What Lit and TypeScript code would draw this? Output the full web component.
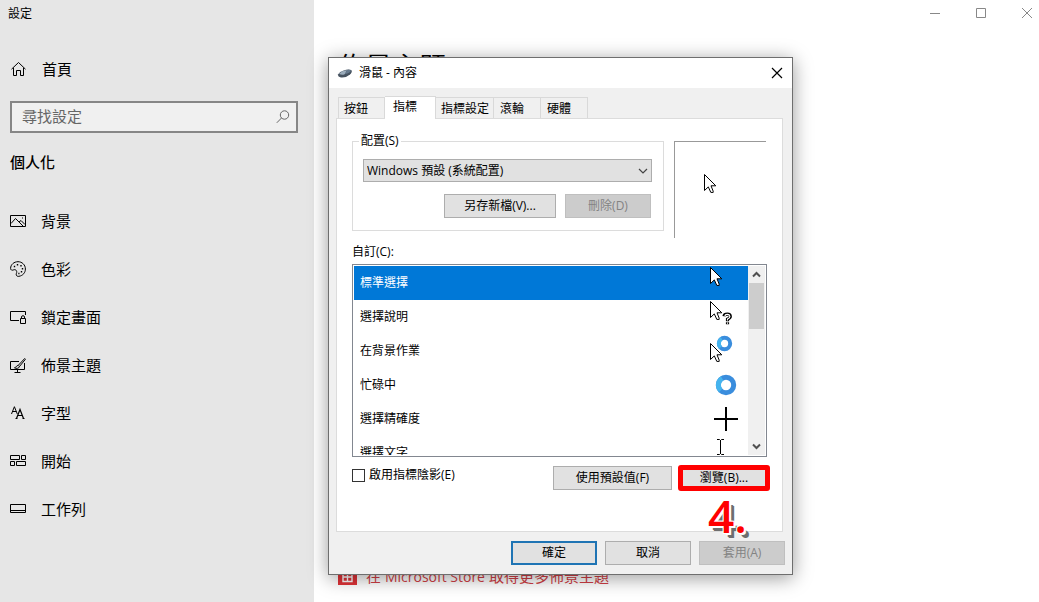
import { LitElement, html, svg, css } from "lit";
import { customElement, state } from "lit/decorators.js";

const arrow = (x: number, y: number) => svg`
  <path transform="translate(${x} ${y})" d="M.5 .5V16.5L4.3 12.9L6.8 18.4H9.2V17.2L7 11.8H11.8Z"
    fill="#fff" stroke="#000" stroke-width="1" stroke-linejoin="miter"/>`;

const ring = (x: number, y: number, r: number, w: number) => svg`
  <circle cx=${x} cy=${y} r=${r} fill="#fff" stroke="#3a8ddd" stroke-width=${w}/>
  <path d="M${x - r * 0.7} ${y + r * 0.7}A${r} ${r} 0 0 1 ${x - r * 0.5} ${y - r * 0.86}" fill="none" stroke="#45b4ee" stroke-width=${w}/>`;

const pointers = [
  { name: "標準選擇", art: arrow(2, 1) },
  {
    name: "選擇說明",
    art: svg`${arrow(2, 1)}
      <g fill="none">
        <path d="M16 16.2Q16.3 14.2 19.3 14.2T22.3 16.4Q22.3 17.8 19.5 19.2V21.2M19.5 22.2V24.2" stroke="#000" stroke-width="3.2"/>
        <path d="M17 16.2Q17 14.4 19.3 14.4T21.9 16.4Q21.9 17.8 19.5 19V20.6M19.5 22.6V23.7" stroke="#fff" stroke-width="1.1"/>
      </g>`,
  },
  { name: "在背景作業", art: svg`${ring(16.5, 9.5, 5.7, 4)}${arrow(2, 9)}` },
  { name: "忙碌中", art: ring(18, 17, 7.7, 5) },
  { name: "選擇精確度", art: svg`<path d="M18 5V29M6 17H30" stroke="#000" stroke-width="2"/>` },
  {
    name: "選擇文字",
    art: svg`<path d="M9 3.5H11.5L12.5 4.5L13.5 3.5H16M12.5 4V18M9 18.5H11.5L12.5 17.5L13.5 18.5H16" fill="none" stroke="#000"/>`,
  },
];

const navItems = [
  {
    name: "背景",
    art: svg`<path d="M.5 2.5H15.5V13.5H.5ZM1 10.5L5.5 5.5L13 13M9 9L11 7.5L15 11.5"/><path d="M12 5H13" />`,
  },
  {
    name: "色彩",
    art: svg`<path d="M8 .7C4 .7 .6 3.6 .6 7.4C.6 9 2 9.6 3.2 9C4.6 8.2 6.4 8.8 6.7 10.4C7 12 5.8 12.8 6.3 14C6.8 15.4 8 15.5 9 15.3C13 14.6 15.4 11.6 15.4 8C15.4 3.8 12 .7 8 .7Z"/>
      <path d="M3.8 5.5H5.2M6.8 3.7H8.2M10.3 4.7H11.7M11.8 7.7H13.2M10.8 10.7H12.2M8.3 12.5H9.5" stroke-width="1.5"/>`,
  },
  {
    name: "鎖定畫面",
    art: svg`<path d="M9 11.5H.5V2.5H15.5V6"/><path d="M10.5 9.5H15.5V14.5H10.5ZM11.5 9.5V8Q11.5 6.7 13 6.7T14.5 8V9.5"/>`,
  },
  {
    name: "佈景主題",
    art: svg`<path d="M9 4.5H.5V12.5H14.5V6M7.5 12.5V15M4.5 15.5H10.5"/><path d="M14.7 1.5L8.2 8.4L9.4 9.6L15.4 2.3Z M8.2 8.4C6.4 8.5 6.5 10.2 4.5 10.8C6.3 11.8 9 11.6 9.4 9.6"/>`,
  },
  {
    name: "字型",
    art: svg`<path d="M1.5 9L4.4 1.7L7.3 9M2.5 6.5H6.3"/><path d="M6.5 13.5L10 4.5L13.5 13.5M7.7 10.5H12.3M5.5 13.5H7.5M12.5 13.5H14.5" stroke-width="1.2"/>`,
  },
  {
    name: "開始",
    art: svg`<path d="M.5 2.5H9.5V6.5H.5ZM11.5 2.5H15.5V6.5H11.5ZM.5 8.5H4.5V12.5H.5ZM6.5 8.5H15.5V12.5H6.5Z"/>`,
  },
  { name: "工作列", art: svg`<path d="M.5 3.5H15.5V11.5H.5ZM.5 9.5H15.5"/>` },
];

const tabs = ["按鈕", "指標", "指標設定", "滾輪", "硬體"];

const shared = css`
  * {
    box-sizing: border-box;
  }
  button,
  input,
  select {
    font: inherit;
    color: inherit;
    margin: 0;
  }
  svg {
    display: block;
    flex: none;
  }
`;

@customElement("settings-sidebar")
export class SettingsSidebar extends LitElement {
  static styles = [
    shared,
    css`
      :host {
        display: block;
        background: #e6e6e6;
        font-size: 15px;
        line-height: 20px;
      }
      .caption {
        padding: 4px 8px;
        font-size: 12px;
      }
      a {
        display: flex;
        align-items: center;
        gap: 15px;
        height: 48px;
        padding: 0 10px;
        color: #000;
        text-decoration: none;
      }
      .home {
        margin-top: 17px;
        gap: 16px;
      }
      .search {
        display: flex;
        align-items: center;
        height: 32px;
        margin: 8px 16px 0 10px;
        padding: 0 6px 0 10px;
        border: 2px solid #868686;
        background: #f0f0f0;
      }
      .search input {
        flex: 1;
        min-width: 0;
        padding: 0 0 2px;
        border: 0;
        outline: 0;
        background: none;
      }
      .search input::placeholder {
        color: #666;
        opacity: 1;
      }
      h2 {
        margin: 19px 10px 25px;
        font-size: 15px;
        font-weight: 500;
      }
    `,
  ];

  render() {
    return html`
      <div class="caption">設定</div>
      <a class="home" href="#home">
        <svg width="16" height="16" viewBox="0 0 16 16" fill="none" stroke="#000">
          <path d="M1.5 8.2L8.5 1.5L15.5 8.2M3.5 6.8V14.5H6.5V9.5H10.5V14.5H13.5V6.8" />
        </svg>
        首頁
      </a>
      <div class="search">
        <input type="text" placeholder="尋找設定" aria-label="尋找設定" />
        <svg width="14" height="14" viewBox="0 0 14 14" fill="none" stroke="#666">
          <circle cx="8.5" cy="5" r="4.2" />
          <path d="M5.5 8L.8 12.8" />
        </svg>
      </div>
      <h2>個人化</h2>
      <nav>
        ${navItems.map(
          (n) => html`<a href="#">
            <svg width="16" height="16" viewBox="0 0 16 16" fill="none" stroke="#000">${n.art}</svg>
            ${n.name}
          </a>`
        )}
      </nav>
    `;
  }
}

@customElement("mouse-dialog")
export class MouseDialog extends LitElement {
  @state() tab = 1;
  @state() selected = 0;

  static styles = [
    shared,
    css`
      :host {
        display: block;
        border: 1px solid #6e6e6e;
        background: #f0f0f0;
        box-shadow: 0 3px 18px rgba(0, 0, 0, 0.4);
        font-size: 12px;
        line-height: 16px;
      }
      header {
        display: flex;
        align-items: center;
        gap: 6px;
        height: 30px;
        padding: 0 8px;
        background: #fff;
      }
      h1 {
        flex: 1;
        margin: 0;
        font-size: 12px;
        font-weight: 400;
      }
      .close {
        padding: 0;
        border: 0;
        background: none;
      }
      .tabs {
        display: flex;
        align-items: flex-end;
        height: 30px;
        padding: 0 9px;
      }
      .tab {
        height: 21px;
        padding: 2px 10px 0 5px;
        border: 1px solid #d9d9d9;
        border-width: 1px 1px 0 0;
        background: #f0f0f0;
        text-align: left;
      }
      .tab:nth-child(3) {
        padding-right: 4px;
      }
      .tab:nth-child(n + 4) {
        padding: 2px 16px 0 6px;
      }
      .tab:first-child {
        width: 47px;
        border-left-width: 1px;
      }
      .tab.on {
        height: 23px;
        margin-bottom: -1px;
        padding: 0 18px 3px 8px;
        background: #fff;
        z-index: 1;
      }
      .panel {
        margin: 0 9px 0 7px;
        padding: 14px 15px 41px;
        border: 1px solid #dcdcdc;
        background: #fff;
      }
      .top {
        display: flex;
        align-items: flex-start;
        gap: 10px;
      }
      fieldset {
        flex: 1;
        min-width: 0;
        margin: 0;
        padding: 10px 11px 12px 10px;
        border: 1px solid #dcdcdc;
      }
      legend {
        margin-left: -4px;
        padding: 0 2px;
      }
      .combo {
        display: grid;
      }
      .combo select,
      .combo svg {
        grid-area: 1 / 1;
      }
      .combo svg {
        justify-self: end;
        align-self: center;
        margin-right: 4px;
        pointer-events: none;
      }
      select {
        appearance: none;
        height: 23px;
        padding: 0 3px;
        border: 1px solid #adadad;
        border-radius: 0;
        background: #e1e1e1;
      }
      .row {
        display: flex;
        justify-content: flex-end;
        gap: 9px;
      }
      fieldset .row {
        margin-top: 12px;
        padding-right: 1px;
      }
      .btn {
        width: 86px;
        height: 24px;
        padding: 0;
        border: 1px solid #adadad;
        background: #e1e1e1;
        color: #000;
      }
      .btn.wide {
        width: 112px;
      }
      .btn.wider {
        width: 119px;
      }
      .btn:disabled {
        border-color: #bfbfbf;
        background: #ccc;
        color: #838383;
      }
      .btn.default {
        border: 2px solid #1f74b4;
      }
      .preview {
        width: 92px;
        height: 97px;
        margin: 8px 1px 0 0;
        padding: 32px 29px;
        border: solid #999;
        border-width: 1px 0 0 1px;
      }
      .label {
        margin: 6px 0 4px;
      }
      .list {
        display: flex;
        height: 193px;
        padding: 1px;
        border: 1px solid #828790;
      }
      ul {
        flex: 1;
        margin: 0;
        padding: 0;
        overflow: hidden;
        list-style: none;
      }
      li {
        display: flex;
        align-items: center;
        justify-content: space-between;
        height: 34px;
        padding: 0 8px 0 6px;
      }
      li.on {
        background: #0078d7;
        color: #fff;
      }
      .bar {
        display: flex;
        flex-direction: column;
        width: 17px;
        padding: 0 1px;
        background: #f0f0f0;
      }
      .bar button {
        display: grid;
        place-items: center;
        height: 17px;
        padding: 0;
        border: 0;
        background: none;
      }
      .track {
        flex: 1;
      }
      .thumb {
        height: 46px;
        background: #cdcdcd;
      }
      .actions {
        display: flex;
        align-items: flex-start;
        gap: 9px;
        margin-top: 9px;
      }
      .check {
        display: flex;
        flex: 1;
        align-items: center;
        gap: 4px;
        height: 18px;
      }
      .check input {
        appearance: none;
        width: 13px;
        height: 13px;
        border: 1px solid #333;
        background: #fff;
      }
      .marked {
        position: relative;
      }
      .marked::after {
        content: "";
        position: absolute;
        inset: -1px -3px;
        border: 5px solid #f00;
        border-radius: 3px;
        pointer-events: none;
      }
      .step {
        position: absolute;
        top: 21px;
        left: 27px;
        color: #f00;
        font: 600 46px/56px "Open Sans", sans-serif;
        text-shadow: -1px -1px #fff, 1px -1px #fff, -1px 1px #fff, 1px 1px #fff, 2px 2px #fff,
          4px 4px #6e6e6e, 5px 5px #6e6e6e;
      }
      .foot {
        gap: 8px;
        padding: 9px 7px;
      }
    `,
  ];

  render() {
    return html`
      <header>
        <svg width="16" height="16" viewBox="0 0 16 16">
          <path d="M1 9.5Q2 7.2 6 5.7Q12 3.5 14.5 5.2Q15.6 7 13 9.5Q9 13 4 12.5Q.8 11.8 1 9.5Z" fill="#46525f" />
          <path d="M2 8.8Q5 5.8 10 5L8 9Q5 10.8 2 8.8Z" fill="#9aabba" />
          <path d="M10 5Q13 4.5 14 5.8Q13 8 8 9Z" fill="#66798c" />
        </svg>
        <h1>滑鼠 - 內容</h1>
        <button class="close" aria-label="關閉">
          <svg width="14" height="14" viewBox="0 0 14 14" stroke="#000" stroke-width="1.2">
            <path d="M2 2L12 12M12 2L2 12" />
          </svg>
        </button>
      </header>
      <div class="tabs" role="tablist">
        ${tabs.map(
          (t, i) => html`<button
            class="tab ${i === this.tab ? "on" : ""}"
            role="tab"
            aria-selected=${i === this.tab}
            @click=${() => (this.tab = i)}
          >${t}</button>`
        )}
      </div>
      <section class="panel">
        <div class="top">
          <fieldset>
            <legend><label for="scheme">配置(S)</label></legend>
            <div class="combo">
              <select id="scheme">
                <option>Windows 預設 (系統配置)</option>
              </select>
              <svg width="10" height="8" viewBox="0 0 10 8" fill="none" stroke="#444" stroke-width="1.2">
                <path d="M1 2L5 6L9 2" />
              </svg>
            </div>
            <div class="row">
              <button class="btn wide">另存新檔(V)...</button>
              <button class="btn" disabled>刪除(D)</button>
            </div>
          </fieldset>
          <div class="preview">
            <svg width="14" height="20" viewBox="0 0 14 20">${arrow(0, 0)}</svg>
          </div>
        </div>
        <div class="label" id="custom">自訂(C):</div>
        <div class="list">
          <ul role="listbox" aria-labelledby="custom">
            ${pointers.map(
              (p, i) => html`<li
                class=${i === this.selected ? "on" : ""}
                role="option"
                aria-selected=${i === this.selected}
                @click=${() => (this.selected = i)}
              >
                ${p.name}
                <svg width="32" height="34" viewBox="0 0 32 34">${p.art}</svg>
              </li>`
            )}
          </ul>
          <div class="bar">
            <button aria-label="向上">
              <svg width="9" height="7" viewBox="0 0 9 7" fill="none" stroke="#505050" stroke-width="2">
                <path d="M1 5.5L4.5 2L8 5.5" />
              </svg>
            </button>
            <div class="track"><div class="thumb"></div></div>
            <button aria-label="向下">
              <svg width="9" height="7" viewBox="0 0 9 7" fill="none" stroke="#505050" stroke-width="2">
                <path d="M1 1.5L4.5 5L8 1.5" />
              </svg>
            </button>
          </div>
        </div>
        <div class="actions">
          <label class="check"><input type="checkbox" />啟用指標陰影(E)</label>
          <button class="btn wider">使用預設值(F)</button>
          <div class="marked">
            <button class="btn">瀏覽(B)...</button>
            <span class="step">4.</span>
          </div>
        </div>
      </section>
      <div class="row foot">
        <button class="btn default">確定</button>
        <button class="btn">取消</button>
        <button class="btn" disabled>套用(A)</button>
      </div>
    `;
  }
}

@customElement("app-root")
export class AppRoot extends LitElement {
  static styles = [
    shared,
    css`
      :host {
        position: relative;
        display: grid;
        grid-template-columns: 314px 1fr;
        min-height: 100vh;
        overflow: hidden;
        background: #fff;
        color: #000;
        font-family: "Open Sans", "Noto Sans CJK TC", sans-serif;
      }
      main {
        display: flex;
        flex-direction: column;
        padding: 0 6px 13px 24px;
      }
      .controls {
        display: flex;
        justify-content: flex-end;
        gap: 34px;
        padding-top: 7px;
      }
      .controls button {
        width: 12px;
        height: 12px;
        padding: 0;
        border: 0;
        background: none;
      }
      h1 {
        margin: 30px 0 0;
        font-size: 27px;
        font-weight: 400;
        line-height: 36px;
      }
      .store {
        display: flex;
        align-items: center;
        gap: 9px;
        margin-top: auto;
        color: #d13f46;
        font-size: 15px;
        line-height: 24px;
        text-decoration: none;
      }
      .latin {
        font-size: 14px;
      }
      mouse-dialog {
        position: absolute;
        top: 57px;
        left: 328px;
        width: 465px;
      }
    `,
  ];

  render() {
    return html`
      <settings-sidebar></settings-sidebar>
      <main>
        <div class="controls">
          <button aria-label="最小化">
            <svg width="12" height="12" viewBox="0 0 12 12" stroke="#888"><path d="M1 6.5H11" /></svg>
          </button>
          <button aria-label="最大化">
            <svg width="12" height="12" viewBox="0 0 12 12" fill="none" stroke="#888"><path d="M1.5 1.5H10.5V10.5H1.5Z" /></svg>
          </button>
          <button aria-label="關閉">
            <svg width="12" height="12" viewBox="0 0 12 12" stroke="#888"><path d="M1 1L11 11M11 1L1 11" /></svg>
          </button>
        </div>
        <h1>佈景主題</h1>
        <a class="store" href="#store">
          <svg width="19" height="20" viewBox="0 0 19 20">
            <path d="M0 3H19V18H0Z" fill="#e03338" />
            <path d="M5 5.5H14V14.5H5ZM9.5 5.5V14.5M5 10H14" fill="none" stroke="#fff" stroke-width="1.4" />
          </svg>
          <span>在 <span class="latin">Microsoft Store</span> 取得更多佈景主題</span>
        </a>
      </main>
      <mouse-dialog></mouse-dialog>
    `;
  }
}
